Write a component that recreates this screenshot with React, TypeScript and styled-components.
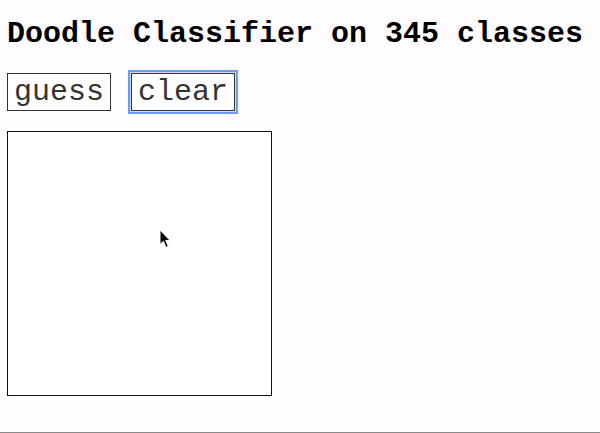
import React from "react";
import styled, { createGlobalStyle } from "styled-components";

const GlobalStyle = createGlobalStyle`
  html, body {
    margin: 0;
    padding: 0;
    background: #fefcfe;
  }
`;

const mono = `"Courier New", Courier, "Nimbus Mono PS", "Nimbus Mono L", FreeMono, "Liberation Mono", monospace`;

const Page = styled.div`
  box-sizing: border-box;
  height: 433px;
  padding: 6px 7px;
  border-bottom: 1px solid #8a8a8a;
  font-family: ${mono};
  color: #000;
  overflow: hidden;
`;

const Title = styled.h1`
  font-size: 30px;
  font-weight: bold;
  margin: 11px 0 22px 0;
  line-height: 34px;
  white-space: nowrap;
`;

const Toolbar = styled.div`
  display: flex;
  gap: 20px;
  align-items: flex-start;
`;

const Button = styled.button<{ $focused?: boolean }>`
  font-family: ${mono};
  font-size: 30px;
  line-height: 34px;
  padding: 1px 6px;
  border: 1px solid #333;
  background: #fff;
  color: #333;
  border-radius: 0;
  outline: ${(p) => (p.$focused ? "2px solid #6c9bef" : "none")};
  outline-offset: 1px;
  box-shadow: ${(p) => (p.$focused ? "0 0 2px 2px rgba(108,155,239,0.35)" : "none")};
  margin: 0;
`;

const CanvasBox = styled.div`
  position: relative;
  margin-top: 20px;
  width: 263px;
  height: 263px;
  border: 1px solid #111;
  background: #fff;
`;

const Cursor = styled.svg`
  position: absolute;
  left: 151px;
  top: 97px;
`;

export default function App() {
  return (
    <Page>
      <GlobalStyle />
      <Title>Doodle Classifier on 345 classes</Title>
      <Toolbar>
        <Button>guess</Button>
        <Button $focused>clear</Button>
      </Toolbar>
      <CanvasBox>
        <Cursor width="13" height="20" viewBox="0 0 13 20">
          <path d="M1 1 L1 15.5 L4.3 12.3 L7 18.5 L9.3 17.5 L6.7 11.4 L11 11.4 Z" fill="#000" stroke="#fff" strokeWidth="1" />
        </Cursor>
      </CanvasBox>
    </Page>
  );
}
